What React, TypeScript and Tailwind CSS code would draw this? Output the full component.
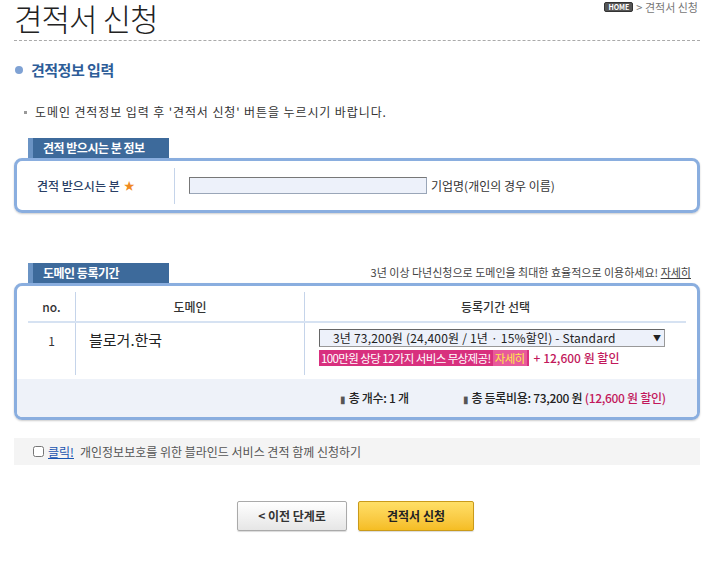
import React from "react";

const F = { fontFamily: '"Noto Sans CJK KR", "Noto Sans", sans-serif' };

function Tab({ children }: { children: React.ReactNode }) {
  return (
    <div className="flex h-[20px] w-[141px] ml-[14px] bg-[#3d6a9b]">
      <div className="w-[5px] bg-[#6a93c4]" />
      <div className="pl-[10px] text-[12px] leading-[20px] font-bold text-white tracking-[-0.5px]">{children}</div>
    </div>
  );
}

export default function App() {
  return (
    <div className="w-[720px] h-[587px] bg-white text-[#333] relative" style={F}>
      <div className="pl-[14px] pr-[20px]">
        {/* title */}
        <div className="flex items-start justify-between h-[41px] border-b border-dashed border-[#aaa]">
          <div className="text-[31px] leading-[36px] font-light text-[#222] tracking-[-1px]">견적서 신청</div>
          <div className="flex items-center gap-[3px] mt-[1px] mr-[2px] text-[11px] leading-[12px] text-[#777]">
            <span className="inline-block bg-[#555] text-white text-[7px] leading-[8px] font-bold px-[3px] rounded-[2px] border border-[#333]">HOME</span>
            <span>&gt; 견적서 신청</span>
          </div>
        </div>

        {/* section */}
        <div className="flex items-center mt-[18px] h-[22px]">
          <span className="inline-block w-[8px] h-[8px] rounded-full bg-[#7fa2d4] ml-[1px]" />
          <span className="ml-[8px] text-[15px] font-bold text-[#2d5d98] tracking-[-0.5px]">견적정보 입력</span>
        </div>

        <div className="flex items-center mt-[23px] h-[16px] text-[12px] text-[#333]">
          <span className="inline-block w-[3px] h-[3px] bg-[#999] ml-[10px]" />
          <span className="ml-[8px] tracking-[0.9px]">도메인 견적정보 입력 후 '견적서 신청' 버튼을 누르시기 바랍니다.</span>
        </div>

        {/* box 1 */}
        <div className="mt-[18px]">
          <Tab>견적 받으시는 분 정보</Tab>
          <div className="h-[55px] rounded-[8px] border-[3px] border-[#8aaedf] shadow-[0_1px_2px_rgba(0,0,0,0.2)] flex items-center">
            <div className="w-[157px] pl-[20px] text-[12px] text-[#2a3f66] font-medium flex items-center gap-[4px]">
              견적 받으시는 분 <span className="text-[#f08a20] text-[11px]">★</span>
            </div>
            <div className="w-px h-[36px] bg-[#c5d4ea]" />
            <input className="ml-[14px] w-[238px] h-[17px] bg-[#edf1fa] border border-[#9aa6b8] border-t-[#777] border-l-[#777] outline-none" />
            <span className="ml-[4px] text-[12px] text-[#333]">기업명(개인의 경우 이름)</span>
          </div>
        </div>

        {/* box 2 */}
        <div className="mt-[50px]">
          <div className="flex items-end justify-between">
            <Tab>도메인 등록기간</Tab>
            <div className="text-[11px] leading-[14px] mb-[4px] mr-[9px] text-[#444]">
              3년 이상 다년신청으로 도메인을 최대한 효율적으로 이용하세요! <span className="underline">자세히</span>
            </div>
          </div>
          <div className="rounded-[8px] border-[3px] border-[#8aaedf] shadow-[0_1px_2px_rgba(0,0,0,0.2)] overflow-hidden">
            <div className="px-[11px] pt-[6px]">
              <div className="flex h-[31px] border-b-2 border-[#d6e2f2] text-[12px] text-[#333] font-medium">
                <div className="w-[47px] flex items-center justify-center">no.</div>
                <div className="w-px bg-[#c5d4ea]" />
                <div className="w-[228px] flex items-center justify-center">도메인</div>
                <div className="w-px bg-[#c5d4ea]" />
                <div className="flex-1 flex items-center justify-center">등록기간 선택</div>
              </div>
              <div className="flex h-[52px]">
                <div className="w-[47px] flex justify-center pt-[9px] text-[12px] text-[#333]">1</div>
                <div className="w-px bg-[#c5d4ea]" />
                <div className="w-[228px] pl-[13px] pt-[6px] text-[15px] text-[#222]">블로거.한국</div>
                <div className="w-px bg-[#c5d4ea]" />
                <div className="flex-1 pl-[14px] pt-[6px]">
                  <div className="w-[346px] h-[18px] flex items-center justify-between bg-[#edf1fa] border border-[#999] border-t-[#666] border-l-[#666] text-[12px] text-[#222]">
                    <span className="pl-[13px] tracking-[0.2px]">3년 73,200원 (24,400원 / 1년 · 15%할인) - Standard</span>
                    <span className="text-[8px] pr-[3px]">▼</span>
                  </div>
                  <div className="flex items-center mt-[3px] h-[16px] text-[12px]">
                    <span className="bg-[#d8307e] text-white px-[2px] h-[16px] leading-[16px] text-[11.5px] tracking-[-0.6px]">
                      100만원 상당 12가지 서비스 무상제공! <span className="bg-[#e85a9a] text-[#ffe94a] px-[2px]">자세히</span>
                    </span>
                    <span className="ml-[5px] text-[#c2185b] font-medium">+ 12,600 원 할인</span>
                  </div>
                </div>
              </div>
            </div>
            <div className="h-[38px] mt-[4px] bg-[#eef2f9] flex items-center text-[12px] font-medium text-[#222] tracking-[-0.3px]">
              <span className="ml-[323px]"><span className="text-[#555] text-[10px] mr-[3px]">▮</span>총 개수: 1 개</span>
              <span className="ml-[54px]"><span className="text-[#555] text-[10px] mr-[3px]">▮</span>총 등록비용: 73,200 원 <span className="text-[#c2185b]">(12,600 원 할인)</span></span>
            </div>
          </div>
        </div>

        {/* checkbox row */}
        <div className="mt-[18px] h-[27px] bg-[#f4f4f4] flex items-center text-[12px]">
          <input type="checkbox" className="ml-[19px] w-[11px] h-[11px]" />
          <span className="ml-[4px] text-[#1a55b0] underline">클릭!</span>
          <span className="ml-[6px] text-[#555]">개인정보보호를 위한 블라인드 서비스 견적 함께 신청하기</span>
        </div>

        {/* buttons */}
        <div className="flex justify-center gap-[11px] mt-[36px] ml-[-3px]">
          <button className="w-[110px] h-[30px] rounded-[2px] border border-[#aaa] bg-gradient-to-b from-[#ffffff] to-[#e6e6e6] shadow-[0_1px_1px_rgba(0,0,0,0.15)] text-[12px] font-bold text-[#333]">
            &lt; 이전 단계로
          </button>
          <button className="w-[116px] h-[30px] rounded-[2px] border border-[#c99a1a] bg-gradient-to-b from-[#ffdf66] to-[#f5bd22] shadow-[0_1px_1px_rgba(0,0,0,0.15)] text-[12px] font-bold text-[#222]">
            견적서 신청
          </button>
        </div>
      </div>
    </div>
  );
}
